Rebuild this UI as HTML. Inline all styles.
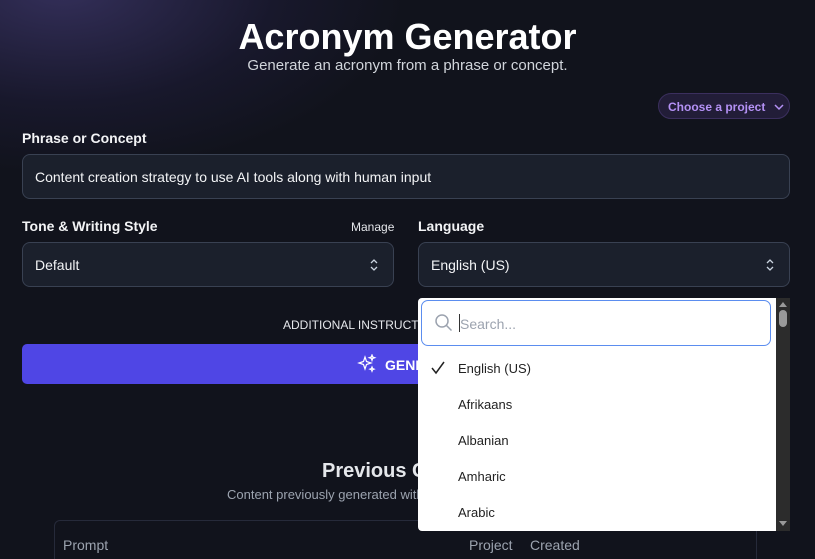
<!DOCTYPE html>
<html><head><meta charset="utf-8"><style>
*{box-sizing:border-box;margin:0;padding:0}
html,body{width:815px;height:559px;overflow:hidden}
body{background:#11131c;font-family:"Liberation Sans",sans-serif;color:#e5e7eb;position:relative}
.glow{position:absolute;left:-120px;top:-160px;width:520px;height:330px;background:radial-gradient(ellipse at 35% 45%,rgba(80,70,140,.55),rgba(40,35,80,.3) 45%,rgba(17,19,28,0) 72%)}
.a{position:absolute}
h1{position:absolute;left:0;width:815px;top:16px;text-align:center;font-size:36px;font-weight:bold;color:#fff}
.sub{left:0;width:815px;top:57px;text-align:center;font-size:15px;color:#d1d5db}
.proj{left:658px;top:93px;width:132px;height:26px;border:1px solid #3b2f5e;background:#221d38;border-radius:13px;color:#b491f5;font-size:12px;font-weight:bold;padding:6px 0 0 9px}
.lbl{font-size:14px;font-weight:bold;color:#f3f4f6}
.box{background:#1b202c;border:1px solid #394152;border-radius:8px;font-size:14px;color:#f3f4f6;padding:0 12px;display:flex;align-items:center}
.dd{left:418px;top:298px;width:372px;height:233px;background:#fff;border-radius:4px 0 0 4px;overflow:hidden}
.sb{position:absolute;right:0;top:0;width:14px;height:233px;background:#2c2c2c}
.search{position:absolute;left:3px;top:2px;width:350px;height:46px;border:1.5px solid #5b8def;border-radius:7px}
.it{position:absolute;left:40px;font-size:13px;color:#222}
</style></head><body>
<div class="glow"></div>
<h1>Acronym Generator</h1>
<div class="a sub">Generate an acronym from a phrase or concept.</div>
<div class="a proj">Choose a project <svg width="10" height="8" style="margin-left:5px" viewBox="0 0 10 8"><path d="M1 2l4 4 4-4" stroke="#b491f5" stroke-width="1.5" fill="none"/></svg></div>
<div class="a lbl" style="left:22px;top:130px">Phrase or Concept</div>
<div class="a box" style="left:22px;top:154px;width:768px;height:45px">Content creation strategy to use AI tools along with human input</div>
<div class="a lbl" style="left:22px;top:218px">Tone &amp; Writing Style</div>
<div class="a" style="left:351px;top:220px;font-size:12px;color:#e5e7eb">Manage</div>
<div class="a lbl" style="left:418px;top:218px">Language</div>
<div class="a box" style="left:22px;top:242px;width:372px;height:45px">Default<svg class="a" style="left:346px;top:15px" width="10" height="14" viewBox="0 0 10 14"><path d="M2 5l3-3 3 3M2 9l3 3 3-3" stroke="#cbd5e1" stroke-width="1.3" fill="none"/></svg></div>
<div class="a box" style="left:418px;top:242px;width:372px;height:45px">English (US)<svg class="a" style="left:346px;top:15px" width="10" height="14" viewBox="0 0 10 14"><path d="M2 5l3-3 3 3M2 9l3 3 3-3" stroke="#cbd5e1" stroke-width="1.3" fill="none"/></svg></div>
<div class="a" style="left:283px;top:318px;font-size:12px;color:#e5e7eb">ADDITIONAL INSTRUCTIONS</div>
<div class="a" style="left:22px;top:344px;width:768px;height:40px;background:#4f46e5;border-radius:5px"></div>
<svg class="a" style="left:357px;top:354px" width="20" height="20" viewBox="0 0 20 20"><path d="M8 3l1.5 4.5L14 9l-4.5 1.5L8 15l-1.5-4.5L2 9l4.5-1.5z M15 1l.7 2 2 .7-2 .7-.7 2-.7-2-2-.7 2-.7z M15 13l.6 1.5 1.5.6-1.5.6-.6 1.5-.6-1.5-1.5-.6 1.5-.6z" stroke="#fff" stroke-width="1.2" fill="none"/></svg>
<div class="a" style="left:385px;top:357px;font-size:14px;font-weight:bold;color:#fff">GENERATE</div>
<div class="a" style="left:322px;top:460px;font-size:20px;font-weight:bold;color:#e5e7eb;white-space:nowrap">Previous Content</div>
<div class="a" style="left:227px;top:487px;font-size:13px;color:#9ca3af;white-space:nowrap">Content previously generated with this tool will appear here.</div>
<div class="a" style="left:54px;top:520px;width:703px;height:60px;border:1px solid #262a3a;border-radius:6px"></div>
<div class="a" style="left:63px;top:537px;font-size:14px;color:#9ca3af">Prompt</div>
<div class="a" style="left:469px;top:537px;font-size:14px;color:#9ca3af">Project</div>
<div class="a" style="left:530px;top:537px;font-size:14px;color:#9ca3af">Created</div>
<div class="a dd">
<div class="search"><svg class="a" style="left:12px;top:12px" width="20" height="20" viewBox="0 0 20 20"><circle cx="8" cy="8" r="6" stroke="#9ca3af" stroke-width="1.5" fill="none"/><path d="M12.5 12.5l5 5" stroke="#9ca3af" stroke-width="1.5"/></svg><div class="a" style="left:37px;top:13px;width:1px;height:18px;background:#333"></div><div class="a" style="left:38px;top:15px;font-size:14px;color:#9ca3af">Search...</div></div>
<svg class="a" style="left:13px;top:63px" width="14" height="14" viewBox="0 0 14 14"><path d="M1 7l4 5 8-11" stroke="#222" stroke-width="1.5" fill="none"/></svg>
<div class="it" style="top:63px">English (US)</div>
<div class="it" style="top:99px">Afrikaans</div>
<div class="it" style="top:135px">Albanian</div>
<div class="it" style="top:171px">Amharic</div>
<div class="it" style="top:207px">Arabic</div>
<div class="sb"><div class="a" style="left:3px;top:4px;width:0;height:0;border:4px solid transparent;border-bottom:5px solid #9a9a9a;border-top:0"></div><div class="a" style="left:3px;top:12px;width:8px;height:17px;background:#9a9a9a;border-radius:4px"></div><div class="a" style="left:3px;top:223px;border:4px solid transparent;border-top:5px solid #9a9a9a;border-bottom:0"></div></div>
</div>
</body></html>
